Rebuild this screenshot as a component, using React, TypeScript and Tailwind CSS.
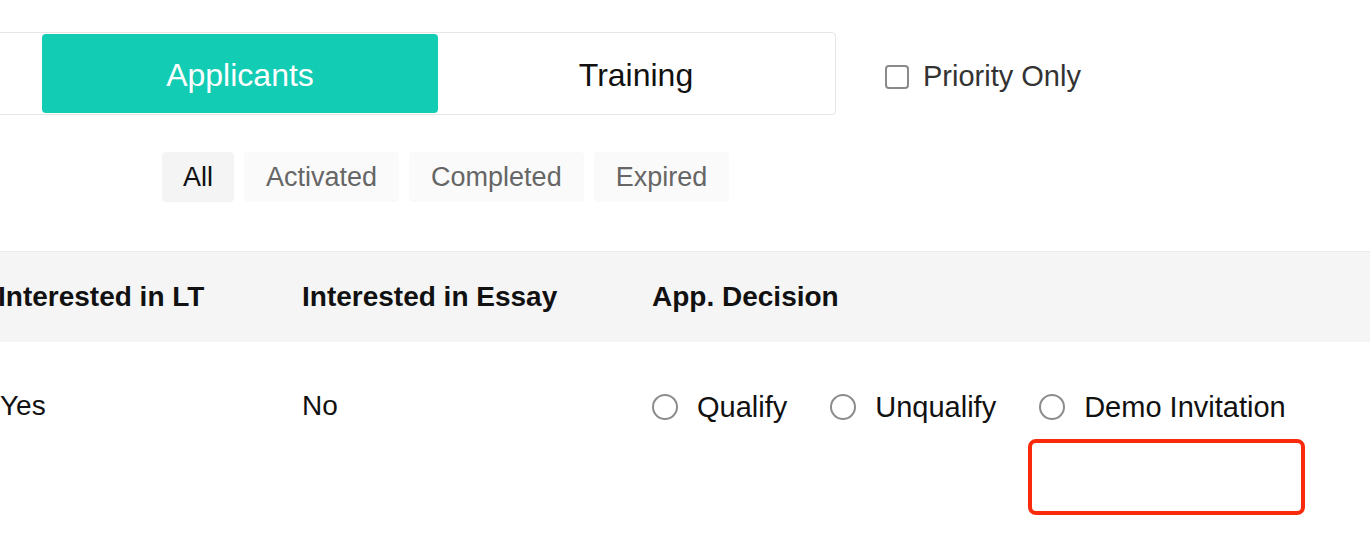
import React from 'react'

const FILTERS = [
  { label: 'All', active: true },
  { label: 'Activated', active: false },
  { label: 'Completed', active: false },
  { label: 'Expired', active: false },
]

const DECISIONS = ['Qualify', 'Unqualify', 'Demo Invitation']

function Radio({ label }: { label: string }) {
  return (
    <label className="flex items-center gap-[19px] text-[29px] leading-[36px] text-[#111]">
      <span className="w-[26px] h-[26px] rounded-full border-2 border-[#8c8c8c] bg-white shrink-0" />
      <span>{label}</span>
    </label>
  )
}

export default function App() {
  return (
    <div className="relative w-[1370px] h-[548px] overflow-hidden bg-white font-['Liberation_Sans',Arial,sans-serif]">
      {/* Tabs + priority toggle */}
      <div className="pt-8 flex items-center">
        <div className="-ml-[4px] flex border border-[#e6e6e6] rounded-[4px] p-px pl-[45px]">
          <button className="w-[396px] h-[79px] pt-[2px] rounded-[4px] bg-[#12ccb4] text-white text-[32px]">
            Applicants
          </button>
          <button className="w-[396px] h-[79px] pt-[2px] rounded-[4px] text-[#111] text-[32px]">
            Training
          </button>
        </div>
        <label className="ml-[49px] mt-[7px] flex items-center gap-[14px]">
          <span className="w-[24px] h-[24px] rounded-[4px] border-2 border-[#8a8a8a] bg-white" />
          <span className="text-[29px] text-[#333]">Priority Only</span>
        </label>
      </div>

      {/* Status filters */}
      <div className="mt-[37px] pl-[162px] flex gap-[10px]">
        {FILTERS.map(f => (
          <button
            key={f.label}
            className={
              f.active
                ? 'h-[50px] px-[21px] rounded-[4px] bg-[#f4f4f4] text-[#111] text-[27px]'
                : 'h-[50px] px-[22px] rounded-[4px] bg-[#fafafa] text-[#666] text-[27px]'
            }
          >
            {f.label}
          </button>
        ))}
      </div>

      {/* Table */}
      <div className="mt-[49px] border-t border-[#ebebeb]">
        <div className="h-[90px] bg-[#f5f5f5] -ml-[2px] grid grid-cols-[304px_350px_1fr] items-center text-[28px] font-bold text-[#111]">
          <div>Interested in LT</div>
          <div>Interested in Essay</div>
          <div>App. Decision</div>
        </div>
        <div className="h-[200px] grid grid-cols-[302px_350px_1fr] items-start text-[28px] leading-[36px] text-[#111]">
          <div className="pt-[46px]">Yes</div>
          <div className="pt-[46px]">No</div>
          <div className="pt-[47px] flex items-start gap-[43px]">
            {DECISIONS.map(d => (
              <Radio key={d} label={d} />
            ))}
          </div>
        </div>
      </div>

      {/* Highlight annotation */}
      <div className="absolute left-[1028px] top-[439px] w-[277px] h-[76px] rounded-[8px] border-4 border-[#fa2a0c]" />
    </div>
  )
}
